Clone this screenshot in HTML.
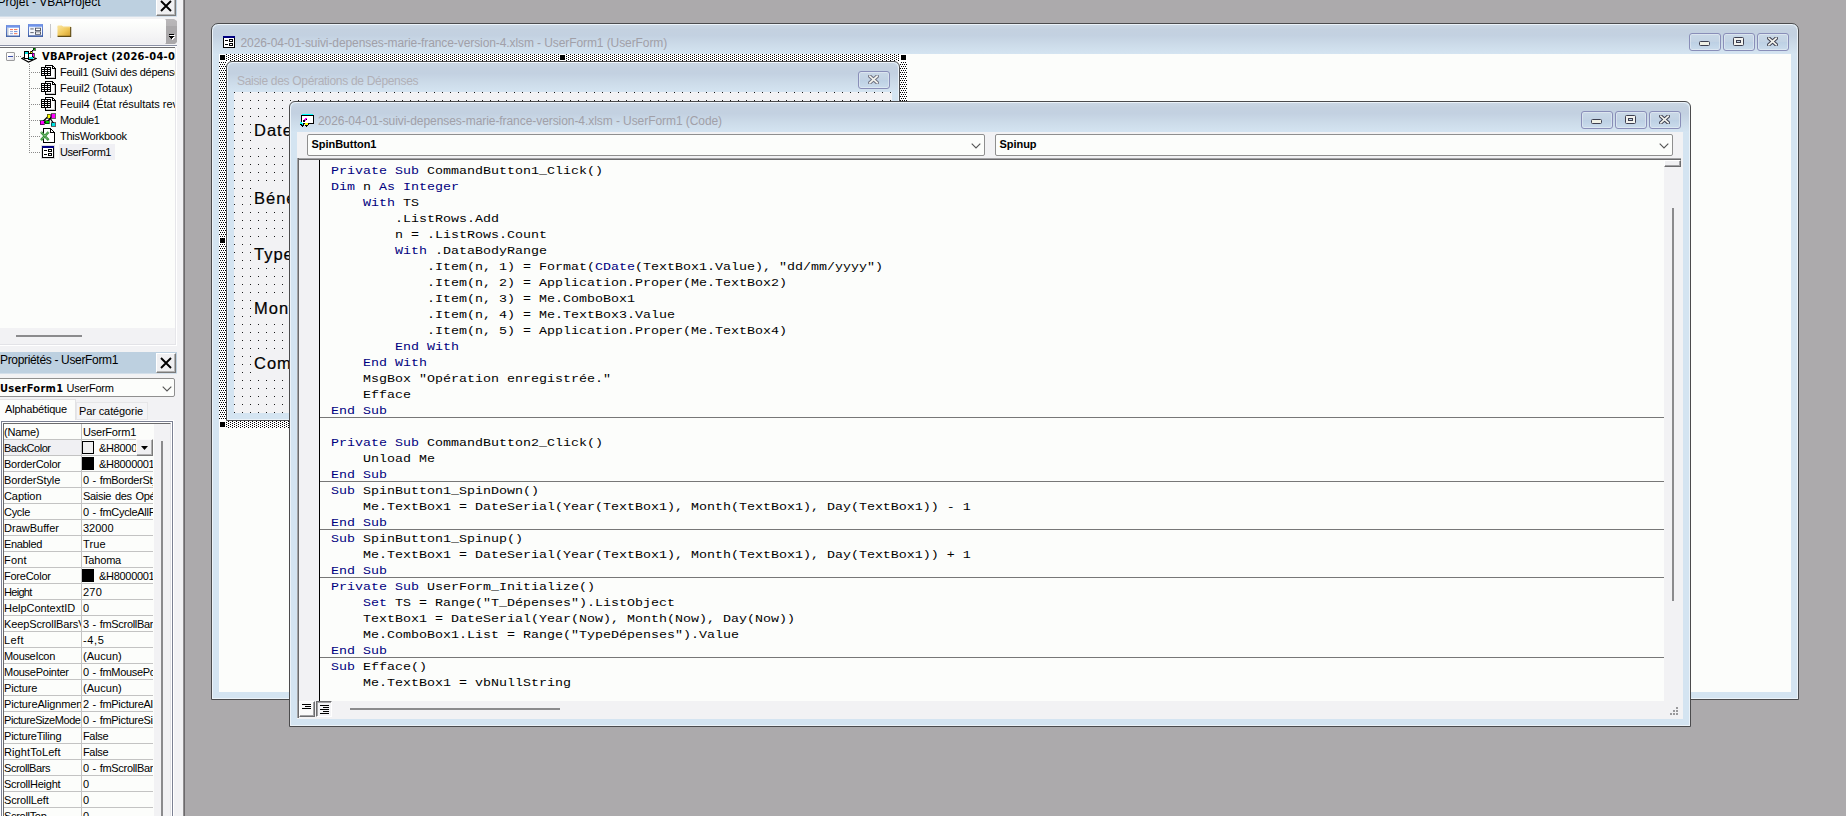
<!DOCTYPE html>
<html lang="fr"><head><meta charset="utf-8"><title>Microsoft Visual Basic pour Applications</title>
<style>
*{box-sizing:border-box}
html,body{margin:0;padding:0}
body{width:1846px;height:816px;position:relative;overflow:hidden;background:#acaaac;font-family:"Liberation Sans",sans-serif;font-size:11px;color:#000}
.a{position:absolute}
.t{position:absolute;white-space:pre;line-height:1}
.ptitle{position:absolute;left:0;width:177px;height:21px;background:#bdd0e0;box-shadow:0 1px 0 #d3dfea}
.ptitle .t{font-size:12px;letter-spacing:-.33px;color:#000}
.xbtn{position:absolute;left:156px;top:1px;width:20px;height:20px;background:#f0f0f2;border:1px solid #fff;border-right-color:#7a7a7a;border-bottom-color:#7a7a7a;box-shadow:inset -1px -1px 0 #b4b4b4}
.win{position:absolute;border:1px solid #4b4b4d;border-radius:7px 7px 0 0;background:#d4e4f1;box-shadow:inset 0 0 0 1px rgba(255,255,255,.55)}
.wtitle{position:absolute;left:1px;right:1px;top:1px;height:30px;border-radius:6px 6px 0 0;background:linear-gradient(to bottom,#cbd7e4 0,#c4d1e0 15%,#c3d1e1 35%,#ccdbe9 65%,#d5e5f2 100%)}
.wtitle .t{font-size:12px;color:#a1a0a8}
.cb{position:absolute;width:32px;height:18px;border:1px solid #898eb8;border-radius:3px;background:linear-gradient(to bottom,#c9d8e7 0,#c3d3e4 48%,#bdd0e4 52%,#cadcec 100%);box-shadow:inset 0 0 0 1px rgba(255,255,255,.35)}
.combo{position:absolute;height:22px;border:1px solid #8f8f8f;border-radius:2px;background:#fcfdfb}
.combo .t{font-weight:bold;font-size:11px;left:3.5px;top:4px;letter-spacing:-.04px}
.kw{color:#000080}
.code{position:absolute;left:331px;top:0;font-family:"Liberation Mono",monospace;font-size:13.333px;line-height:18px;height:18px;white-space:pre;color:#000;margin:0;transform:scaleY(.88);transform-origin:0 0}
.prow{position:absolute;left:4px;width:149px;height:16px;border-bottom:1px solid #c3c3c3}
.prow .n{position:absolute;left:0;top:0;width:77px;height:15px;overflow:hidden;white-space:pre;line-height:17px;padding-left:0;letter-spacing:-.3px;border-right:0}
.prow .v{position:absolute;left:78px;top:0;width:71px;height:15px;overflow:hidden;white-space:pre;line-height:17px;padding-left:1px;letter-spacing:-.3px;word-spacing:1px}
.tree .t{letter-spacing:-.28px;font-size:11px}
.lbl{position:absolute;font-size:16.5px;white-space:pre;line-height:1;letter-spacing:1px;-webkit-text-stroke:.2px #000}
</style></head>
<body>
<div class="a" id="left" style="left:0;top:0;width:183px;height:816px;background:#f2f2f4;overflow:hidden">
<div class="a" style="left:0;top:0;width:177px;height:816px;background:#f2f2f4"></div>
<div class="ptitle" style="top:-5px"><span class="t" style="left:-2.5px;top:1px;letter-spacing:-.02px">Projet - VBAProject</span><div class="xbtn"><svg class="a" style="left:3px;top:3px" width="12" height="12" viewBox="0 0 12 12"><path d="M1 1L11 11M11 1L1 11" stroke="#000" stroke-width="1.9" fill="none"/></svg></div></div>
<div class="a" id="ptool" style="left:-4px;top:19px;width:170px;height:25px;border-radius:0 3px 3px 0;background:linear-gradient(to bottom,#fff 0,#fcfdfb 20%,#f6f6f7 60%,#efeff1 100%)"></div>
<div class="a" style="left:165px;top:19px;width:12px;height:25px;background:linear-gradient(to bottom,#bab8ba 0,#b6b4b6 26%,#aaa8aa 30%,#aaa8aa 100%);clip-path:polygon(0 0,9px 0,12px 2px,12px 23px,10px 25px,0 25px,1px 24px,1px 1px)"><svg class="a" style="left:4px;top:15px" width="6" height="6" viewBox="0 0 6 6" shape-rendering="crispEdges"><rect x="1" y="1" width="5" height="1" fill="#fff"/><rect x="0" y="0" width="5" height="1" fill="#000"/><path d="M1 3H6L3.5 6Z" fill="#fff"/><rect x="0" y="2" width="5" height="1"/><rect x="1" y="3" width="3" height="1"/><rect x="2" y="4" width="1" height="1"/></svg></div>
<svg class="a" style="left:6px;top:25px" width="14" height="12" viewBox="0 0 14 13" preserveAspectRatio="none"><defs><linearGradient id="tb1" x1="0" y1="0" x2="0" y2="1"><stop offset="0" stop-color="#5b82e6"/><stop offset="1" stop-color="#a9c4f5"/></linearGradient><linearGradient id="tb2" x1="0" y1="0" x2="0" y2="1"><stop offset="0" stop-color="#6f8fe0"/><stop offset="1" stop-color="#3f5fa6"/></linearGradient></defs><rect x=".5" y=".5" width="13" height="12" fill="#fff" stroke="url(#tb2)"/><rect x="1" y="1" width="12" height="2.2" fill="url(#tb1)"/><rect x="1" y="3.2" width="1.6" height="8.8" fill="#c3cbd9"/><rect x="4" y="4.5" width="3" height="1" fill="#f26b4a"/><rect x="8" y="4.5" width="3.4" height="1" fill="#f26b4a"/><rect x="4" y="6.7" width="3" height="1" fill="#8aa0d8"/><rect x="8" y="6.7" width="3.4" height="1" fill="#5d86d8"/><rect x="4" y="8.9" width="3" height="1" fill="#8aa0d8"/><rect x="8" y="8.9" width="3.4" height="1" fill="#f26b4a"/><rect x="1" y="11.4" width="12" height=".8" fill="#4a67ad"/></svg><svg class="a" style="left:28px;top:24px" width="15" height="13" viewBox="0 0 15 14" preserveAspectRatio="none"><rect x=".5" y=".5" width="14" height="13" fill="#f4f7fd" stroke="url(#tb2)"/><rect x="1" y="1" width="13" height="2.4" fill="url(#tb1)"/><rect x="2.3" y="4.8" width="3.4" height="1" fill="#555a66"/><rect x="7.5" y="4.5" width="5" height="2.6" fill="#fff" stroke="#4a4f5c" stroke-width=".9"/><rect x="2.3" y="8.8" width="3.4" height="1" fill="#555a66"/><rect x="7.5" y="8.5" width="5" height="2.6" fill="#fff" stroke="#4a4f5c" stroke-width=".9"/><rect x="1" y="12.2" width="13" height=".9" fill="#3f5a9e"/></svg><div class="a" style="left:50px;top:24px;width:1px;height:14px;background:#c6c6c8"></div><svg class="a" style="left:57px;top:25px" width="15" height="12" viewBox="0 0 16 13" preserveAspectRatio="none"><defs><linearGradient id="fo" x1="0" y1="0" x2="1" y2="1"><stop offset="0" stop-color="#fbe7a0"/><stop offset=".55" stop-color="#f0c85a"/><stop offset="1" stop-color="#d39f2e"/></linearGradient></defs><path d="M.5 1.2Q.5 .5 1.2 .5H5.2L6.6 2H14.5V12H.5Z" fill="url(#fo)"/><path d="M.5 2.2H14.6" stroke="#f7dc8c" stroke-width=".8" fill="none"/><path d="M14.6 2.2V12.3H.6" stroke="#5e4a14" stroke-width="1.2" fill="none"/></svg>
<div class="a" style="left:0;top:45px;width:177px;height:1px;background:#8a90a4"></div><div class="a" style="left:0;top:46px;width:177px;height:1px;background:#fff"></div><div class="a" style="left:0;top:47px;width:175px;height:1px;background:#6e6e70"></div>
<div class="a tree" id="tree" style="left:0;top:48px;width:175px;height:280px;background:#fcfdfb;overflow:hidden">
<div class="a" style="left:6px;top:4px;width:9px;height:9px;border:1px solid #9b9b9d;border-radius:1px;background:linear-gradient(135deg,#fff 30%,#dcdce4)"><div class="a" style="left:1px;top:3px;width:5px;height:1px;background:#3b4fa8"></div></div><div class="a" style="left:16px;top:8px;width:5px;height:1px;background:repeating-linear-gradient(to right,#8a8a8a 0 1px,transparent 1px 2px)"></div><svg class="a" style="left:21px;top:0px" width="16" height="15" viewBox="0 0 16 15"><path d="M1 10.5L7.5 14L15 10.5L11 9H4Z" fill="#fff" stroke="#000" stroke-width="1.2"/><g shape-rendering="crispEdges"><rect x="3" y="3" width="4" height="7" fill="#fff" stroke="#000"/><rect x="4" y="4" width="3" height="2" fill="#00e0e0"/><rect x="7" y="5" width="4" height="6" fill="#fff" stroke="#000"/><rect x="8" y="9" width="4" height="2" fill="#00e0e0"/><rect x="9" y="3" width="2" height="2" fill="#ffff00" stroke="#000" stroke-width=".6"/><rect x="11" y="5" width="2" height="3" fill="#ff00ff" stroke="#000" stroke-width=".6"/><rect x="12" y="0" width="2" height="2" fill="#00d000" stroke="#000" stroke-width=".6"/></g><path d="M10 4L12.5 1.5" stroke="#000" stroke-width="1"/></svg><span class="t" style="left:42px;top:3px;font-weight:bold;font-family:&quot;DejaVu Sans Condensed&quot;,&quot;Liberation Sans&quot;,sans-serif;letter-spacing:.3px">VBAProject (2026-04-01-suivi-depenses-marie-france-version-4.xlsm)</span><div class="a" style="left:29px;top:16px;width:1px;height:89px;background:repeating-linear-gradient(to bottom,#8a8a8a 0 1px,transparent 1px 2px)"></div><div class="a" style="left:31px;top:24px;width:9px;height:1px;background:repeating-linear-gradient(to right,#8a8a8a 0 1px,transparent 1px 2px)"></div><svg class="a" style="left:41px;top:17px" width="16" height="15" viewBox="0 0 16 15" shape-rendering="crispEdges"><path d="M4.5 .5H11.5L14.5 3.5V13.5H4.5Z" fill="#fff" stroke="#000"/><path d="M11.5 .5V3.5H14.5" fill="none" stroke="#000"/><path d="M13.5 4V12.5H5" fill="none" stroke="#c8c8c8"/><rect x="0" y="2" width="10" height="9" fill="#000"/><g fill="#fff"><rect x="1" y="3" width="2" height="1"/><rect x="4" y="3" width="2" height="1"/><rect x="7" y="3" width="2" height="1"/><rect x="1" y="5" width="2" height="1"/><rect x="4" y="5" width="2" height="1"/><rect x="7" y="5" width="2" height="1"/><rect x="1" y="7" width="2" height="1"/><rect x="4" y="7" width="2" height="1"/><rect x="7" y="7" width="2" height="1"/><rect x="1" y="9" width="2" height="1"/><rect x="4" y="9" width="2" height="1"/><rect x="7" y="9" width="2" height="1"/></g></svg><span class="t" style="left:60px;top:19px;letter-spacing:-0.26px">Feuil1 (Suivi des dépenses)</span><div class="a" style="left:31px;top:40px;width:9px;height:1px;background:repeating-linear-gradient(to right,#8a8a8a 0 1px,transparent 1px 2px)"></div><svg class="a" style="left:41px;top:33px" width="16" height="15" viewBox="0 0 16 15" shape-rendering="crispEdges"><path d="M4.5 .5H11.5L14.5 3.5V13.5H4.5Z" fill="#fff" stroke="#000"/><path d="M11.5 .5V3.5H14.5" fill="none" stroke="#000"/><path d="M13.5 4V12.5H5" fill="none" stroke="#c8c8c8"/><rect x="0" y="2" width="10" height="9" fill="#000"/><g fill="#fff"><rect x="1" y="3" width="2" height="1"/><rect x="4" y="3" width="2" height="1"/><rect x="7" y="3" width="2" height="1"/><rect x="1" y="5" width="2" height="1"/><rect x="4" y="5" width="2" height="1"/><rect x="7" y="5" width="2" height="1"/><rect x="1" y="7" width="2" height="1"/><rect x="4" y="7" width="2" height="1"/><rect x="7" y="7" width="2" height="1"/><rect x="1" y="9" width="2" height="1"/><rect x="4" y="9" width="2" height="1"/><rect x="7" y="9" width="2" height="1"/></g></svg><span class="t" style="left:60px;top:35px;letter-spacing:-0.02px">Feuil2 (Totaux)</span><div class="a" style="left:31px;top:56px;width:9px;height:1px;background:repeating-linear-gradient(to right,#8a8a8a 0 1px,transparent 1px 2px)"></div><svg class="a" style="left:41px;top:49px" width="16" height="15" viewBox="0 0 16 15" shape-rendering="crispEdges"><path d="M4.5 .5H11.5L14.5 3.5V13.5H4.5Z" fill="#fff" stroke="#000"/><path d="M11.5 .5V3.5H14.5" fill="none" stroke="#000"/><path d="M13.5 4V12.5H5" fill="none" stroke="#c8c8c8"/><rect x="0" y="2" width="10" height="9" fill="#000"/><g fill="#fff"><rect x="1" y="3" width="2" height="1"/><rect x="4" y="3" width="2" height="1"/><rect x="7" y="3" width="2" height="1"/><rect x="1" y="5" width="2" height="1"/><rect x="4" y="5" width="2" height="1"/><rect x="7" y="5" width="2" height="1"/><rect x="1" y="7" width="2" height="1"/><rect x="4" y="7" width="2" height="1"/><rect x="7" y="7" width="2" height="1"/><rect x="1" y="9" width="2" height="1"/><rect x="4" y="9" width="2" height="1"/><rect x="7" y="9" width="2" height="1"/></g></svg><span class="t" style="left:60px;top:51px;letter-spacing:-0.05px">Feuil4 (État résultats revenus)</span><div class="a" style="left:31px;top:72px;width:9px;height:1px;background:repeating-linear-gradient(to right,#8a8a8a 0 1px,transparent 1px 2px)"></div><svg class="a" style="left:39px;top:65px" width="18" height="14" viewBox="0 0 18 14"><g stroke="#000" stroke-width="1.3" fill="none"><path d="M3 9.5L9.5 3"/><path d="M9.5 3L15 11"/><path d="M13.5 3L8 9"/><path d="M3 9.5L8 9"/></g><g shape-rendering="crispEdges"><rect x="8" y="1" width="3" height="4" fill="#ffff00" stroke="#000" stroke-width=".6"/><rect x="12" y="0.5" width="4" height="4.5" fill="#ff00ff" stroke="#000" stroke-width=".6"/><rect x="1" y="7.5" width="4" height="4" fill="#ff00ff" stroke="#000" stroke-width=".6"/><rect x="6" y="7.5" width="4" height="3" fill="#00d000" stroke="#000" stroke-width=".6"/><rect x="12" y="9.5" width="4" height="3.5" fill="#00e0e0" stroke="#000" stroke-width=".6"/></g></svg><span class="t" style="left:60px;top:67px;letter-spacing:-0.37px">Module1</span><div class="a" style="left:31px;top:88px;width:9px;height:1px;background:repeating-linear-gradient(to right,#8a8a8a 0 1px,transparent 1px 2px)"></div><svg class="a" style="left:40px;top:80px" width="16" height="16" viewBox="0 0 16 16"><path d="M3.5 .5H10.5L14.5 4.5V14.5H3.5Z" fill="#fff" stroke="#000" stroke-width="1" shape-rendering="crispEdges"/><path d="M10.5 .5V4.5H14.5" fill="none" stroke="#000" stroke-width="1" shape-rendering="crispEdges"/><path d="M1 4L8.6 12.2M8.6 4L1 12.2" stroke="#3c963c" stroke-width="2.5"/><path d="M1 4L8.6 12.2M8.6 4L1 12.2" stroke="#d8ecd8" stroke-width=".7" stroke-dasharray="1 1.2"/></svg><span class="t" style="left:60px;top:83px;letter-spacing:-0.28px">ThisWorkbook</span><div class="a" style="left:31px;top:104px;width:9px;height:1px;background:repeating-linear-gradient(to right,#8a8a8a 0 1px,transparent 1px 2px)"></div><div class="a" style="left:59px;top:96px;width:56px;height:16px;background:#f0f0f4"></div><div class="a" style="left:41px;top:97px;width:14px;height:14px;background:#dcdce0"></div><svg class="a" style="left:42px;top:98px" width="12" height="12" viewBox="0 0 12 12" shape-rendering="crispEdges"><rect x="0" y="0" width="12" height="12" fill="#000"/><rect x="0" y="0" width="12" height="2" fill="#000080"/><rect x="1" y="2" width="10" height="9" fill="#fff"/><rect x="2" y="4" width="3" height="1" fill="#000"/><rect x="6" y="3" width="4" height="3" fill="#000"/><rect x="7" y="4" width="2" height="1" fill="#fff"/><rect x="2" y="8" width="3" height="1" fill="#000"/><rect x="6" y="7" width="4" height="3" fill="#000"/><rect x="7" y="8" width="2" height="1" fill="#fff"/></svg><span class="t" style="left:60px;top:99px;letter-spacing:-0.44px">UserForm1</span>
</div>
<div class="a" style="left:0;top:328px;width:177px;height:16px;background:#f2f2f4"></div><div class="a" style="left:16px;top:335px;width:66px;height:2px;background:#8b8b8d"></div>
<div class="a" style="left:0;top:344px;width:177px;height:1px;background:#e3e3e7"></div><div class="a" style="left:0;top:345px;width:177px;height:1px;background:#fff"></div><div class="a" style="left:175px;top:48px;width:1px;height:296px;background:#e6e6ea"></div><div class="a" style="left:176px;top:48px;width:1px;height:298px;background:#fff"></div>
<div class="ptitle" style="top:352px"><span class="t" style="left:0;top:2px">Propriétés - UserForm1</span><div class="xbtn"><svg class="a" style="left:3px;top:3px" width="12" height="12" viewBox="0 0 12 12"><path d="M1 1L11 11M11 1L1 11" stroke="#000" stroke-width="1.9" fill="none"/></svg></div></div>
<div class="combo" style="left:-2px;top:378px;width:177px;height:19px"><span class="t" style="left:1px;top:4px;font-weight:bold;font-family:&quot;DejaVu Sans Condensed&quot;,&quot;Liberation Sans&quot;,sans-serif;letter-spacing:.3px">UserForm1</span><span class="t" style="left:67.5px;top:4px;font-weight:normal;letter-spacing:-.2px">UserForm</span><svg class="a" style="left:163px;top:7px" width="10" height="6" viewBox="0 0 10 6"><path d="M.7 .7L5 5L9.3 .7" stroke="#555" stroke-width="1.1" fill="none"/></svg></div>
<div class="a" style="left:-1px;top:399px;width:77px;height:23px;background:#fcfdfb;border:1px solid #e2e2e4;border-bottom:0"></div><span class="t" style="left:5px;top:404px;letter-spacing:-.19px">Alphabétique</span>
<div class="a" style="left:76px;top:402px;width:72px;height:18px;background:#f4f4f6;border:1px solid #e6e6e8"></div><span class="t" style="left:79px;top:406px;letter-spacing:-.11px">Par catégorie</span>
<div class="a" style="left:0;top:420px;width:174px;height:400px;background:#fff"></div><div class="a" id="grid" style="left:1px;top:421px;width:172px;height:400px;border:1px solid #7b8092;background:#fff"><div class="a" style="left:1px;top:1px;width:168px;height:400px;border:1px solid #6b6b6d;border-right-color:#e3e3e7;background:#fcfdfb"></div></div>
<div class="a" id="props" style="left:0;top:424px;width:176px;height:392px;overflow:hidden">
<div class="prow" style="top:0px"><div class="n" style="letter-spacing:-0.23px">(Name)</div><div class="v" style="letter-spacing:-0.22px">UserForm1</div></div><div class="prow" style="top:16px"><div class="n" style="background:#f0f0f3;letter-spacing:-0.47px">BackColor</div><div class="v"><span style="display:inline-block;vertical-align:top;width:12px;height:13px;margin:1px 5px 0 -1px;border:1px solid #000;background:#f0f0f0"></span>&amp;H8000000F&amp;</div></div><div class="prow" style="top:32px"><div class="n" style="letter-spacing:-0.23px">BorderColor</div><div class="v"><span style="display:inline-block;vertical-align:top;width:12px;height:13px;margin:1px 5px 0 -1px;border:1px solid #000;background:#000"></span>&amp;H80000012&amp;</div></div><div class="prow" style="top:48px"><div class="n" style="letter-spacing:-0.12px">BorderStyle</div><div class="v">0 - fmBorderStyleNone</div></div><div class="prow" style="top:64px"><div class="n" style="letter-spacing:-0.07px">Caption</div><div class="v">Saisie des Opérations de Dépenses</div></div><div class="prow" style="top:80px"><div class="n" style="letter-spacing:-0.31px">Cycle</div><div class="v">0 - fmCycleAllForms</div></div><div class="prow" style="top:96px"><div class="n" style="letter-spacing:0.02px">DrawBuffer</div><div class="v" style="letter-spacing:-0.02px">32000</div></div><div class="prow" style="top:112px"><div class="n" style="letter-spacing:-0.35px">Enabled</div><div class="v" style="letter-spacing:0.10px">True</div></div><div class="prow" style="top:128px"><div class="n" style="letter-spacing:0.16px">Font</div><div class="v" style="letter-spacing:-0.18px">Tahoma</div></div><div class="prow" style="top:144px"><div class="n" style="letter-spacing:-0.24px">ForeColor</div><div class="v"><span style="display:inline-block;vertical-align:top;width:12px;height:13px;margin:1px 5px 0 -1px;border:1px solid #000;background:#000"></span>&amp;H80000012&amp;</div></div><div class="prow" style="top:160px"><div class="n" style="letter-spacing:-0.71px">Height</div><div class="v" style="letter-spacing:0.20px">270</div></div><div class="prow" style="top:176px"><div class="n" style="letter-spacing:-0.03px">HelpContextID</div><div class="v">0</div></div><div class="prow" style="top:192px"><div class="n" style="letter-spacing:-.12px">KeepScrollBarsVisible</div><div class="v">3 - fmScrollBarsBoth</div></div><div class="prow" style="top:208px"><div class="n" style="letter-spacing:0.40px">Left</div><div class="v" style="letter-spacing:0.61px">-4,5</div></div><div class="prow" style="top:224px"><div class="n" style="letter-spacing:-0.32px">MouseIcon</div><div class="v" style="letter-spacing:0.03px">(Aucun)</div></div><div class="prow" style="top:240px"><div class="n" style="letter-spacing:-0.26px">MousePointer</div><div class="v">0 - fmMousePointerDefault</div></div><div class="prow" style="top:256px"><div class="n" style="letter-spacing:-0.16px">Picture</div><div class="v" style="letter-spacing:0.03px">(Aucun)</div></div><div class="prow" style="top:272px"><div class="n" style="letter-spacing:-.12px">PictureAlignment</div><div class="v">2 - fmPictureAlignmentCenter</div></div><div class="prow" style="top:288px"><div class="n" style="letter-spacing:-0.44px">PictureSizeMode</div><div class="v">0 - fmPictureSizeModeClip</div></div><div class="prow" style="top:304px"><div class="n" style="letter-spacing:-0.21px">PictureTiling</div><div class="v" style="letter-spacing:-0.35px">False</div></div><div class="prow" style="top:320px"><div class="n" style="letter-spacing:0.09px">RightToLeft</div><div class="v" style="letter-spacing:-0.35px">False</div></div><div class="prow" style="top:336px"><div class="n" style="letter-spacing:-0.40px">ScrollBars</div><div class="v">0 - fmScrollBarsNone</div></div><div class="prow" style="top:352px"><div class="n" style="letter-spacing:-0.25px">ScrollHeight</div><div class="v">0</div></div><div class="prow" style="top:368px"><div class="n" style="letter-spacing:-0.13px">ScrollLeft</div><div class="v">0</div></div><div class="prow" style="top:384px"><div class="n" style="letter-spacing:-0.31px">ScrollTop</div><div class="v">0</div></div><div class="a" style="left:81px;top:0;width:1px;height:400px;background:#c3c3c3"></div><div class="a" style="left:154px;top:0;width:16px;height:400px;background:#f2f2f4"></div><div class="a" style="left:161px;top:17px;width:2px;height:400px;background:#8b8b8d"></div><div class="a" style="left:136px;top:15px;width:17px;height:17px;background:#f0f0f2;border:1px solid #fafafa;border-right-color:#7a7a7a;border-bottom-color:#7a7a7a;box-shadow:inset -1px -1px 0 #b0b0b0"><svg class="a" style="left:4px;top:6px" width="7" height="4" viewBox="0 0 7 4"><path d="M0 0H7L3.5 4Z" fill="#000"/></svg></div>
</div>
</div>
<div class="a" style="left:183px;top:0;width:2px;height:816px;background:linear-gradient(to right,#908e90 50%,#6c6a6c 50%)"></div>
<div class="win" id="wform" style="left:211px;top:23px;width:1588px;height:677px"><div class="wtitle"><span class="t" style="left:27.5px;top:12px;letter-spacing:-.09px">2026-04-01-suivi-depenses-marie-france-version-4.xlsm - UserForm1 (UserForm)</span></div><svg class="a" style="left:11px;top:12px" width="12" height="12" viewBox="0 0 12 12" shape-rendering="crispEdges"><rect x="0" y="0" width="12" height="12" fill="#000"/><rect x="0" y="0" width="12" height="2" fill="#000080"/><rect x="1" y="2" width="10" height="9" fill="#fff"/><rect x="2" y="4" width="3" height="1" fill="#000"/><rect x="6" y="3" width="4" height="3" fill="#000"/><rect x="7" y="4" width="2" height="1" fill="#fff"/><rect x="2" y="8" width="3" height="1" fill="#000"/><rect x="6" y="7" width="4" height="3" fill="#000"/><rect x="7" y="8" width="2" height="1" fill="#fff"/></svg><div class="cb" style="left:1477px;top:9px"><svg class="a" style="left:9px;top:7px" width="11" height="5" viewBox="0 0 11 5"><rect x=".5" y=".5" width="10" height="4" rx="1" fill="#f0f1e6" stroke="#3e4050"/></svg></div><div class="cb" style="left:1511px;top:9px"><svg class="a" style="left:9px;top:3px" width="11" height="9" viewBox="0 0 11 9"><rect x=".5" y=".5" width="10" height="8" rx="1" fill="#f2f2ee" stroke="#3e4050"/><rect x="3.5" y="3.5" width="4" height="2" fill="#c3d3e6" stroke="#3e4050"/></svg></div><div class="cb" style="left:1545px;top:9px"><svg class="a" style="left:9px;top:3px" width="11" height="9" viewBox="0 0 11 9"><path d="M1.9 1.3L9.1 7.7M9.1 1.3L1.9 7.7" stroke="#3e4050" stroke-width="3.7" stroke-linecap="square"/><path d="M1.9 1.3L9.1 7.7M9.1 1.3L1.9 7.7" stroke="#f4f4ee" stroke-width="1.7" stroke-linecap="square"/></svg></div><div class="a" style="left:7px;top:30px;width:1572px;height:638px;background:#fcfdfb"></div></div>
<svg class="a" style="left:219px;top:54px" width="688" height="374" shape-rendering="crispEdges"><defs><pattern id="hh" x="-1" y="0" width="4" height="2" patternUnits="userSpaceOnUse"><rect width="4" height="2" fill="#fff"/><rect x="0" y="0" width="1" height="1" fill="#000"/><rect x="2" y="1" width="1" height="1" fill="#000"/></pattern><pattern id="hv" x="0" y="0" width="2" height="4" patternUnits="userSpaceOnUse"><rect width="2" height="4" fill="#fff"/><rect x="0" y="0" width="1" height="1" fill="#000"/><rect x="1" y="2" width="1" height="1" fill="#000"/></pattern></defs><rect x="0" y="0" width="688" height="8" fill="#fff"/><rect x="0" y="366" width="688" height="8" fill="#fff"/><rect x="0" y="0" width="8" height="374" fill="#fff"/><rect x="680" y="0" width="8" height="374" fill="#fff"/><rect x="7" y="0" width="674" height="7" fill="url(#hh)"/><rect x="7" y="367" width="674" height="7" fill="url(#hh)"/><rect x="0" y="8" width="7" height="359" fill="url(#hv)"/><rect x="681" y="8" width="7" height="359" fill="url(#hv)"/><rect x="0" y="0" width="7" height="8" fill="#fff"/><rect x="681" y="0" width="7" height="8" fill="#fff"/><rect x="0" y="366" width="7" height="8" fill="#fff"/><rect x="681" y="366" width="7" height="8" fill="#fff"/><rect x="0" y="0" width="7" height="7" fill="#fff"/><rect x="1" y="1" width="5" height="5" fill="#000"/><rect x="340" y="0" width="7" height="7" fill="#fff"/><rect x="341" y="1" width="5" height="5" fill="#000"/><rect x="681" y="0" width="7" height="7" fill="#fff"/><rect x="682" y="1" width="5" height="5" fill="#000"/><rect x="0" y="183" width="7" height="7" fill="#fff"/><rect x="1" y="184" width="5" height="5" fill="#000"/><rect x="681" y="183" width="7" height="7" fill="#fff"/><rect x="682" y="184" width="5" height="5" fill="#000"/><rect x="0" y="367" width="7" height="7" fill="#fff"/><rect x="1" y="368" width="5" height="5" fill="#000"/><rect x="340" y="367" width="7" height="7" fill="#fff"/><rect x="341" y="368" width="5" height="5" fill="#000"/><rect x="681" y="367" width="7" height="7" fill="#fff"/><rect x="682" y="368" width="5" height="5" fill="#000"/></svg>
<div class="win" id="dform" style="left:226px;top:61px;width:674px;height:360px;border-radius:6px 6px 0 0"><div class="wtitle" style="height:30px"><span class="t" style="left:9px;top:12px;letter-spacing:-.31px;color:#b1b0b7">Saisie des Opérations de Dépenses</span></div><div class="cb" style="left:631px;top:9px;width:32px"><svg class="a" style="left:9px;top:3px" width="11" height="9" viewBox="0 0 11 9"><path d="M1.9 1.3L9.1 7.7M9.1 1.3L1.9 7.7" stroke="#6e7080" stroke-width="3.7" stroke-linecap="square"/><path d="M1.9 1.3L9.1 7.7M9.1 1.3L1.9 7.7" stroke="#f4f4ee" stroke-width="1.7" stroke-linecap="square"/></svg></div><svg class="a" style="left:7px;top:30px" width="658" height="321" shape-rendering="crispEdges"><defs><pattern id="dots" width="8" height="8" patternUnits="userSpaceOnUse"><rect x="0" y="0" width="1" height="1" fill="#1a1a1a"/></pattern></defs><rect width="658" height="321" fill="#f2f2f4"/><rect y="0" width="658" height="321" fill="url(#dots)"/></svg><div class="a" style="left:26px;top:58px;width:160px;height:24px;background:#f2f2f4"><span class="lbl" style="left:1px;top:2.0px">Date</span></div><div class="a" style="left:26px;top:126px;width:160px;height:24px;background:#f2f2f4"><span class="lbl" style="left:1px;top:2.0px">Bénéficiaire</span></div><div class="a" style="left:26px;top:181px;width:160px;height:24px;background:#f2f2f4"><span class="lbl" style="left:1px;top:2.5px">Type</span></div><div class="a" style="left:26px;top:236px;width:160px;height:24px;background:#f2f2f4"><span class="lbl" style="left:1px;top:2.0px">Montant</span></div><div class="a" style="left:26px;top:290px;width:160px;height:24px;background:#f2f2f4"><span class="lbl" style="left:1px;top:2.6px">Commentaire</span></div></div>
<div class="win" id="wcode" style="left:289px;top:101px;width:1402px;height:626px;border-radius:6px 6px 0 0"><div class="wtitle"><span class="t" style="left:27px;top:12px;letter-spacing:-.066px">2026-04-01-suivi-depenses-marie-france-version-4.xlsm - UserForm1 (Code)</span></div><svg class="a" style="left:10px;top:12px" width="14" height="13" viewBox="0 0 14 13" shape-rendering="crispEdges"><rect x="1" y="1" width="13" height="9" fill="#000"/><rect x="2" y="0" width="11" height="1" fill="#00ffff"/><rect x="2" y="2" width="11" height="7" fill="#fff"/><rect x="1" y="8" width="7" height="3" fill="#fff" opacity="0"/><rect x="4" y="5" width="2" height="2" fill="#ff00ff"/><rect x="5" y="4" width="2" height="2" fill="#ff00ff"/><rect x="3" y="6" width="2" height="2" fill="#000"/><rect x="6" y="5" width="1" height="1" fill="#000"/><rect x="0" y="8" width="2" height="2" fill="#00ffff"/><rect x="1" y="9" width="2" height="2" fill="#00ffff"/><rect x="0" y="10" width="2" height="1" fill="#000"/><rect x="1" y="11" width="3" height="1" fill="#000"/><rect x="2" y="12" width="1" height="1" fill="#000"/><rect x="3" y="10" width="1" height="1" fill="#000"/><rect x="2" y="9" width="6" height="1" fill="#fff" opacity="0"/><rect x="5" y="9" width="3" height="2" fill="#ffff00"/><rect x="5" y="11" width="3" height="1" fill="#000"/><rect x="6" y="12" width="1" height="1" fill="#000"/><rect x="8" y="10" width="1" height="1" fill="#000"/></svg><div class="cb" style="left:1291px;top:9px"><svg class="a" style="left:9px;top:7px" width="11" height="5" viewBox="0 0 11 5"><rect x=".5" y=".5" width="10" height="4" rx="1" fill="#f0f1e6" stroke="#3e4050"/></svg></div><div class="cb" style="left:1325px;top:9px"><svg class="a" style="left:9px;top:3px" width="11" height="9" viewBox="0 0 11 9"><rect x=".5" y=".5" width="10" height="8" rx="1" fill="#f2f2ee" stroke="#3e4050"/><rect x="3.5" y="3.5" width="4" height="2" fill="#c3d3e6" stroke="#3e4050"/></svg></div><div class="cb" style="left:1359px;top:9px"><svg class="a" style="left:9px;top:3px" width="11" height="9" viewBox="0 0 11 9"><path d="M1.9 1.3L9.1 7.7M9.1 1.3L1.9 7.7" stroke="#3e4050" stroke-width="3.7" stroke-linecap="square"/><path d="M1.9 1.3L9.1 7.7M9.1 1.3L1.9 7.7" stroke="#f4f4ee" stroke-width="1.7" stroke-linecap="square"/></svg></div></div>
<div class="a" style="left:297px;top:132px;width:1386px;height:587px;background:#f2f2f4"></div>
<div class="combo" style="left:307px;top:134px;width:678px"><span class="t">SpinButton1</span><svg class="a" style="right:3px;top:8px" width="10" height="6" viewBox="0 0 10 6"><path d="M.7 .7L5 5L9.3 .7" stroke="#555" stroke-width="1.1" fill="none"/></svg></div><div class="combo" style="left:995px;top:134px;width:678px"><span class="t">Spinup</span><svg class="a" style="right:3px;top:8px" width="10" height="6" viewBox="0 0 10 6"><path d="M.7 .7L5 5L9.3 .7" stroke="#555" stroke-width="1.1" fill="none"/></svg></div>
<div class="a" style="left:297px;top:158px;width:1384px;height:2px;background:linear-gradient(#a3a3a5 50%,#6a6a6c 50%)"></div><div class="a" style="left:297px;top:158px;width:2px;height:560px;background:linear-gradient(to right,#a3a3a5 50%,#6a6a6c 50%)"></div><div class="a" style="left:299px;top:160px;width:20px;height:541px;background:#f2f2f4"></div><div class="a" style="left:319px;top:160px;width:1px;height:541px;background:#000"></div><div class="a" style="left:320px;top:160px;width:1344px;height:541px;background:#fcfdfb"></div>
<div class="a" style="left:320px;top:417px;width:1344px;height:1px;background:#777"></div><div class="a" style="left:320px;top:481px;width:1344px;height:1px;background:#777"></div><div class="a" style="left:320px;top:529px;width:1344px;height:1px;background:#777"></div><div class="a" style="left:320px;top:577px;width:1344px;height:1px;background:#777"></div><div class="a" style="left:320px;top:657px;width:1344px;height:1px;background:#777"></div>
<div class="a" style="left:1664px;top:160px;width:17px;height:7px;background:#f0f0f2;border:1px solid #fff;border-right-color:#6c6c6e;border-bottom-color:#6c6c6e;box-shadow:inset -1px -1px 0 #a3a3a5"></div><div class="a" style="left:1672px;top:208px;width:2px;height:393px;background:#8b8b8d"></div>
<div class="a" style="left:350px;top:708px;width:210px;height:2px;background:#8b8b8d"></div><div class="a" style="left:299px;top:701px;width:16px;height:16px;background:#fafafa;border:1px solid #fff;border-right-color:#6c6c6e;border-bottom-color:#6c6c6e;box-shadow:inset -1px -1px 0 #a3a3a5"><svg class="a" style="left:2px;top:2px" width="10" height="8" viewBox="0 0 10 8" shape-rendering="crispEdges"><rect x="0" y="0" width="9" height="1"/><rect x="3" y="2" width="6" height="1"/><rect x="0" y="4" width="9" height="1"/></svg></div><div class="a" style="left:316px;top:701px;width:16px;height:16px;background:#f4f4f6;border:1px solid #6c6c6e;border-right-color:#fff;border-bottom-color:#fff;box-shadow:inset 1px 1px 0 #a3a3a5"><svg class="a" style="left:2px;top:3px" width="11" height="10" viewBox="0 0 11 10" shape-rendering="crispEdges"><rect x="1" y="0" width="9" height="1"/><rect x="4" y="2" width="6" height="1"/><rect x="1" y="4" width="9" height="1"/><rect x="4" y="6" width="6" height="1"/><rect x="1" y="8" width="9" height="1"/></svg></div><svg class="a" style="left:1670px;top:707px" width="8" height="8" viewBox="0 0 8 8" shape-rendering="crispEdges"><g fill="#9a9a9c"><rect x="6" y="0" width="2" height="2"/><rect x="3" y="3" width="2" height="2"/><rect x="6" y="3" width="2" height="2"/><rect x="0" y="6" width="2" height="2"/><rect x="3" y="6" width="2" height="2"/><rect x="6" y="6" width="2" height="2"/></g></svg>
<div class="code" style="top:163px"><span class="kw">Private Sub</span> CommandButton1_Click()</div>
<div class="code" style="top:179px"><span class="kw">Dim</span> n <span class="kw">As Integer</span></div>
<div class="code" style="top:195px">    <span class="kw">With</span> TS</div>
<div class="code" style="top:211px">        .ListRows.Add</div>
<div class="code" style="top:227px">        n = .ListRows.Count</div>
<div class="code" style="top:243px">        <span class="kw">With</span> .DataBodyRange</div>
<div class="code" style="top:259px">            .Item(n, 1) = Format(<span class="kw">CDate</span>(TextBox1.Value), "dd/mm/yyyy")</div>
<div class="code" style="top:275px">            .Item(n, 2) = Application.Proper(Me.TextBox2)</div>
<div class="code" style="top:291px">            .Item(n, 3) = Me.ComboBox1</div>
<div class="code" style="top:307px">            .Item(n, 4) = Me.TextBox3.Value</div>
<div class="code" style="top:323px">            .Item(n, 5) = Application.Proper(Me.TextBox4)</div>
<div class="code" style="top:339px">        <span class="kw">End With</span></div>
<div class="code" style="top:355px">    <span class="kw">End With</span></div>
<div class="code" style="top:371px">    MsgBox "Opération enregistrée."</div>
<div class="code" style="top:387px">    Efface</div>
<div class="code" style="top:403px"><span class="kw">End Sub</span></div>
<div class="code" style="top:435px"><span class="kw">Private Sub</span> CommandButton2_Click()</div>
<div class="code" style="top:451px">    Unload Me</div>
<div class="code" style="top:467px"><span class="kw">End Sub</span></div>
<div class="code" style="top:483px"><span class="kw">Sub</span> SpinButton1_SpinDown()</div>
<div class="code" style="top:499px">    Me.TextBox1 = DateSerial(Year(TextBox1), Month(TextBox1), Day(TextBox1)) - 1</div>
<div class="code" style="top:515px"><span class="kw">End Sub</span></div>
<div class="code" style="top:531px"><span class="kw">Sub</span> SpinButton1_Spinup()</div>
<div class="code" style="top:547px">    Me.TextBox1 = DateSerial(Year(TextBox1), Month(TextBox1), Day(TextBox1)) + 1</div>
<div class="code" style="top:563px"><span class="kw">End Sub</span></div>
<div class="code" style="top:579px"><span class="kw">Private Sub</span> UserForm_Initialize()</div>
<div class="code" style="top:595px">    <span class="kw">Set</span> TS = Range("T_Dépenses").ListObject</div>
<div class="code" style="top:611px">    TextBox1 = DateSerial(Year(Now), Month(Now), Day(Now))</div>
<div class="code" style="top:627px">    Me.ComboBox1.List = Range("TypeDépenses").Value</div>
<div class="code" style="top:643px"><span class="kw">End Sub</span></div>
<div class="code" style="top:659px"><span class="kw">Sub</span> Efface()</div>
<div class="code" style="top:675px">    Me.TextBox1 = vbNullString</div>
</body></html>
